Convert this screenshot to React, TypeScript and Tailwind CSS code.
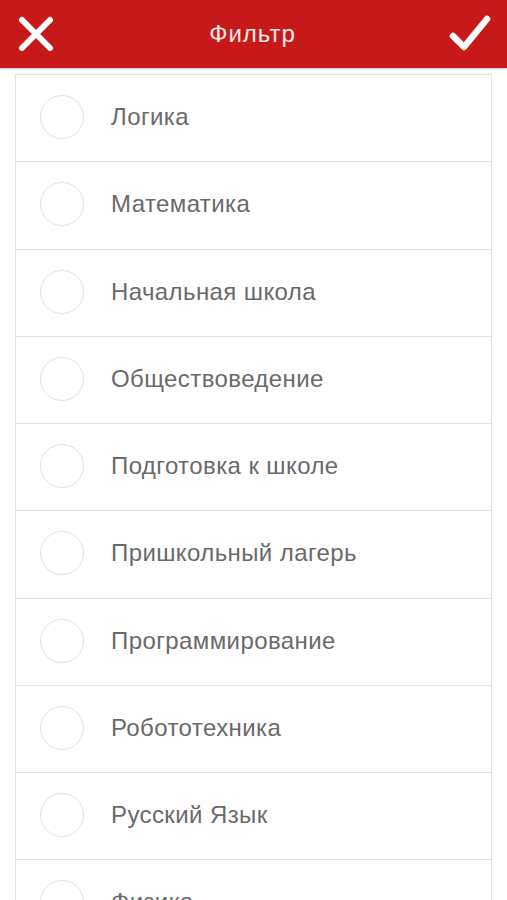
import { useState } from 'react'

const items = [
  'Логика',
  'Математика',
  'Начальная школа',
  'Обществоведение',
  'Подготовка к школе',
  'Пришкольный лагерь',
  'Программирование',
  'Робототехника',
  'Русский Язык',
  'Физика',
]

export default function App() {
  const [checked, setChecked] = useState<string[]>([])

  const toggle = (name: string) => {
    setChecked((prev) => (prev.includes(name) ? prev.filter((n) => n !== name) : [...prev, name]))
  }

  return (
    <div className="h-[900px] overflow-hidden bg-white font-['Liberation_Sans',Arial,sans-serif]">
      {/* Header */}
      <div className="flex h-[68px] items-center justify-between bg-[#c8191a] px-[16px] shadow-[0_1px_2px_rgba(0,0,0,0.25)]">
        <svg width="40" height="40" viewBox="0 0 40 40">
          <path d="M6 6 L34 34 M34 6 L6 34" stroke="white" strokeWidth="6" strokeLinecap="round" />
        </svg>
        <span className="text-[24px] tracking-[1px] text-[#fbeaea]">Фильтр</span>
        <svg width="42" height="40" viewBox="0 0 42 40">
          <path d="M4 22 L15 33 L38 5" stroke="white" strokeWidth="6.5" strokeLinecap="round" strokeLinejoin="round" fill="none" />
        </svg>
      </div>

      {/* List */}
      <div className="mx-[15px] mt-[6px] border border-[#e3e3e3]">
        {items.map((name) => (
          <div
            key={name}
            onClick={() => toggle(name)}
            className="flex h-[87.25px] items-center gap-[27px] border-b border-[#e3e3e3] pb-[2px] pl-[24px]"
          >
            <div
              className={
                checked.includes(name)
                  ? 'h-[44px] w-[44px] shrink-0 rounded-full border-[1.5px] border-[#c8191a] bg-[#c8191a]'
                  : 'h-[44px] w-[44px] shrink-0 rounded-full border-[1.5px] border-[#e2e2e2]'
              }
            />
            <span className="text-[24px] tracking-[0.4px] text-[#6a6a6a]">{name}</span>
          </div>
        ))}
      </div>
    </div>
  )
}
